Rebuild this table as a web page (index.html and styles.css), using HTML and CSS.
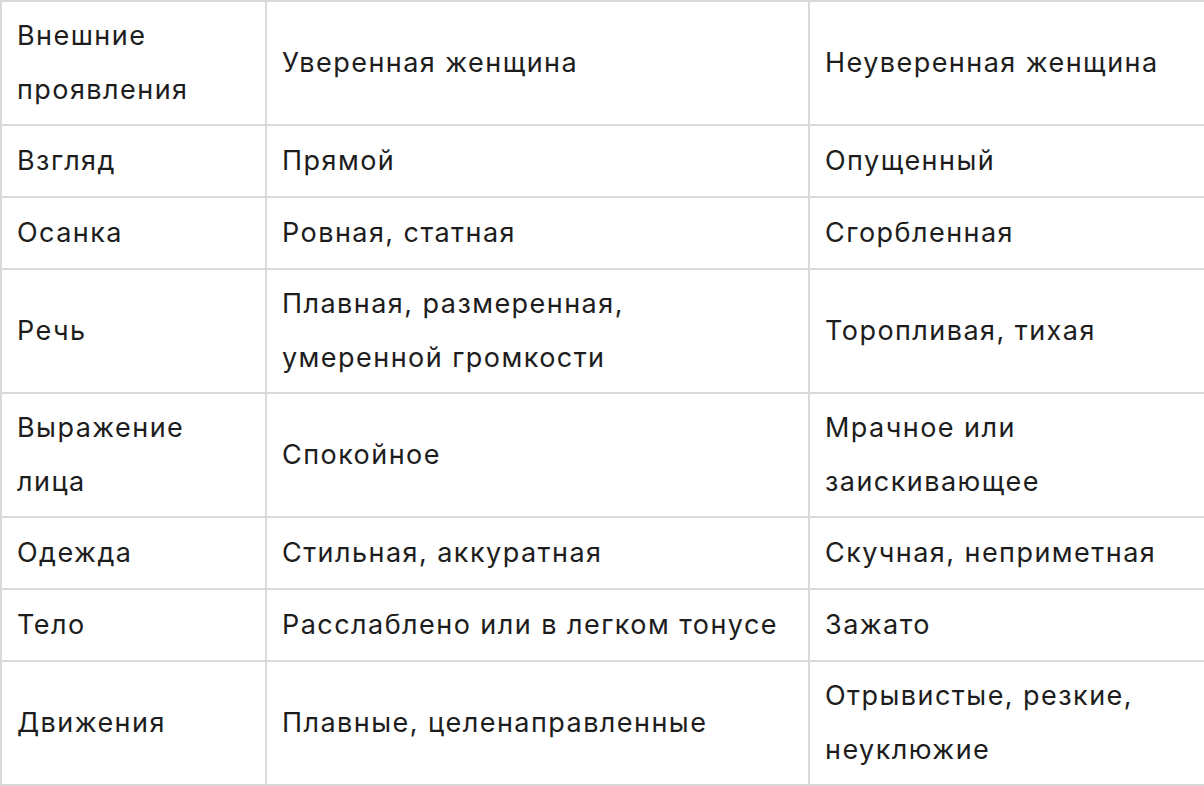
FILE: index.html
```html
<!DOCTYPE html>
<html lang="ru">
<head>
<meta charset="utf-8">
<link rel="stylesheet" href="styles.css">
</head>
<body>
<table class="cmp">
  <colgroup>
    <col class="c1"><col class="c2"><col class="c3">
  </colgroup>
  <tbody>
    <tr><td>Внешние проявления</td><td>Уверенная женщина</td><td>Неуверенная женщина</td></tr>
    <tr><td>Взгляд</td><td>Прямой</td><td>Опущенный</td></tr>
    <tr><td>Осанка</td><td>Ровная, статная</td><td>Сгорбленная</td></tr>
    <tr><td>Речь</td><td>Плавная, размеренная, умеренной громкости</td><td>Торопливая, тихая</td></tr>
    <tr><td>Выражение лица</td><td>Спокойное</td><td>Мрачное или заискивающее</td></tr>
    <tr><td>Одежда</td><td>Стильная, аккуратная</td><td>Скучная, неприметная</td></tr>
    <tr><td>Тело</td><td>Расслаблено или в легком тонусе</td><td>Зажато</td></tr>
    <tr><td>Движения</td><td>Плавные, целенаправленные</td><td>Отрывистые, резкие, неуклюжие</td></tr>
  </tbody>
</table>
</body>
</html>
```
FILE: styles.css
```css
html, body {
  margin: 0;
  padding: 0;
  background: #ffffff;
}
.cmp {
  width: 1204px;
  table-layout: fixed;
  border-collapse: collapse;
  font-family: Inter, "Noto Sans", sans-serif;
  font-size: 27px;
  letter-spacing: 1.45px;
  line-height: 54px;
  color: #1d1d1d;
}
.c1 { width: 265px; }
.c2 { width: 543px; }
.c3 { width: 396px; }
.cmp td {
  border: 2px solid #d9d9d9;
  padding: 7px 16px 7px 15px;
  vertical-align: middle;
  height: 56px;
}
```
